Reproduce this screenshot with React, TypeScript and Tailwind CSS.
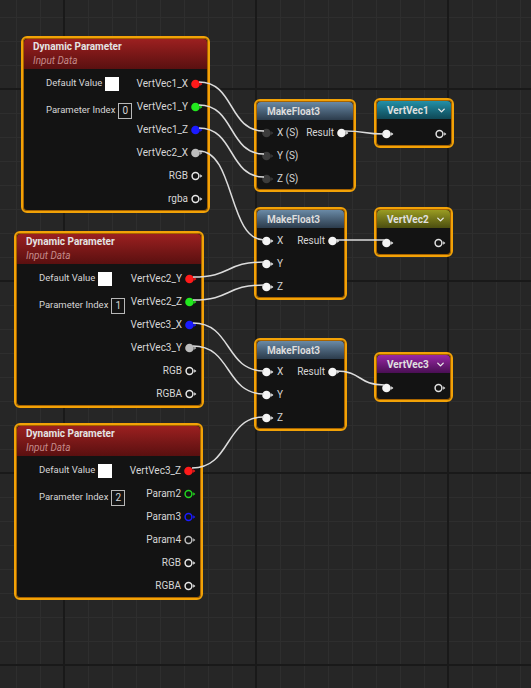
import React from "react";
import { ChevronDown } from "lucide-react";

type PinKind = "filled" | "ring";

function Pin({ color, kind }: { color: string; kind: PinKind }) {
  return (
    <svg width="12" height="10" viewBox="0 0 12 10" className="shrink-0">
      {kind === "filled" ? (
        <circle cx="4.5" cy="5" r="4.3" fill={color} />
      ) : (
        <circle cx="4.5" cy="5" r="3.4" fill="none" stroke={color} strokeWidth="1.5" />
      )}
      <path d="M9.2 3.2 L11.4 5 L9.2 6.8 Z" fill={color} />
    </svg>
  );
}

type Output = { label: string; color: string; kind: PinKind };

function DynamicParameter({
  className,
  index,
  outputs,
}: {
  className: string;
  index: number;
  outputs: Output[];
}) {
  return (
    <div
      className={`absolute rounded-[6px] border-2 border-[#f2a207] bg-[#131313] shadow-[inset_0_0_0_1px_#a86400] ${className}`}
    >
      <div className="m-px rounded-t-[4px] h-[30px] pl-[9px] pt-[3px] bg-linear-to-b from-[#9c2020] to-[#5a1010] leading-none">
        <div className="text-[10px] font-bold text-[#e4e4e4]">Dynamic Parameter</div>
        <div className="mt-[4px] text-[10px] italic text-[#c48a8a]">Input Data</div>
      </div>
      <div className="flex justify-between pt-[2px] pb-px whitespace-nowrap">
        <div className="shrink-0 pl-[23px] text-[9.5px] text-[#d6d6d6]">
          <div className="h-[23px] flex items-center gap-[3px]">
            <span>Default Value</span>
            <span className="w-[14px] h-[14px] bg-white" />
          </div>
          <div className="mt-[4px] h-[23px] flex items-center gap-[3px]">
            <span>Parameter Index</span>
            <span className="w-[14px] h-[16px] border border-[#b8b8b8] flex items-center justify-center text-[10px]">
              {index}
            </span>
          </div>
        </div>
        <div className="shrink-0 pr-[5px] text-[10px] text-[#d6d6d6]">
          {outputs.map((o) => (
            <div key={o.label} className="h-[23px] flex items-center justify-end gap-[3px]">
              <span>{o.label}</span>
              <Pin color={o.color} kind={o.kind} />
            </div>
          ))}
        </div>
      </div>
    </div>
  );
}

function MakeFloat3({
  className,
  labels,
  pinColor,
}: {
  className: string;
  labels: string[];
  pinColor: string;
}) {
  return (
    <div
      className={`absolute rounded-[6px] border-2 border-[#f2a207] bg-[#131313] shadow-[inset_0_0_0_1px_#a86400] ${className}`}
    >
      <div className="m-px rounded-t-[4px] h-[18px] pl-[10px] flex items-center bg-linear-to-b from-[#6a8aa6] to-[#2c3c4c] text-[10px] font-bold text-[#dcdcdc]">
        MakeFloat3
      </div>
      <div className="flex justify-between text-[10px] text-[#d6d6d6] whitespace-nowrap">
        <div className="pl-[6px]">
          {labels.map((l) => (
            <div key={l} className="h-[23px] flex items-center gap-[3px]">
              <Pin color={pinColor} kind="filled" />
              <span>{l}</span>
            </div>
          ))}
        </div>
        <div className="pr-[5px]">
          <div className="h-[23px] flex items-center gap-[3px]">
            <span>Result</span>
            <Pin color="#f4f4f4" kind="filled" />
          </div>
        </div>
      </div>
    </div>
  );
}

function VarNode({ className, title, header }: { className: string; title: string; header: string }) {
  return (
    <div
      className={`absolute rounded-[6px] border-2 border-[#f2a207] bg-[#131313] shadow-[inset_0_0_0_1px_#a86400] ${className}`}
    >
      <div className={`m-px rounded-t-[4px] h-[18px] pl-[10px] pr-[4px] flex items-center justify-between ${header}`}>
        <span className="text-[10px] font-bold text-[#e0e0e0]">{title}</span>
        <ChevronDown size={11} strokeWidth={3} color="#e8e8e8" />
      </div>
      <div className="flex justify-between pl-[6px] pr-[5px] pt-[2px] pb-px">
        <div className="h-[23px] flex items-center">
          <Pin color="#f4f4f4" kind="filled" />
        </div>
        <div className="h-[23px] flex items-center">
          <Pin color="#e0e0e0" kind="ring" />
        </div>
      </div>
    </div>
  );
}

const wires: [number, number, number, number][] = [
  [199, 82, 264, 131],
  [199, 105, 264, 154],
  [199, 128, 264, 177],
  [199, 151, 264, 240],
  [193, 277, 264, 262],
  [193, 300, 264, 285],
  [193, 323, 264, 371],
  [193, 346, 264, 394],
  [192, 468, 264, 417],
  [345, 131, 384, 134],
  [336, 240, 384, 240],
  [336, 371, 384, 385],
];

function wirePath([x1, y1, x2, y2]: [number, number, number, number]) {
  const dx = Math.max(20, (x2 - x1) * 0.55);
  return `M${x1} ${y1} C${x1 + dx} ${y1} ${x2 - dx} ${y2} ${x2} ${y2}`;
}

function Grid() {
  const minorX = Array.from({ length: 23 }, (_, i) => 16 + i * 24);
  const minorY = Array.from({ length: 29 }, (_, i) => 17 + i * 24);
  return (
    <svg className="absolute inset-0" width="531" height="688">
      {minorX.map((x) => (
        <line key={`x${x}`} x1={x + 0.5} y1="0" x2={x + 0.5} y2="688" stroke="#2e2e2e" strokeWidth="1" />
      ))}
      {minorY.map((y) => (
        <line key={`y${y}`} x1="0" y1={y + 0.5} x2="531" y2={y + 0.5} stroke="#2e2e2e" strokeWidth="1" />
      ))}
      {[64, 256, 448].map((x) => (
        <line key={`X${x}`} x1={x} y1="0" x2={x} y2="688" stroke="#191919" strokeWidth="2" />
      ))}
      {[89, 281, 473, 665].map((y) => (
        <line key={`Y${y}`} x1="0" y1={y} x2="531" y2={y} stroke="#191919" strokeWidth="2" />
      ))}
    </svg>
  );
}

export default function App() {
  return (
    <div className="relative w-[531px] h-[688px] overflow-hidden bg-[#262626] font-['Roboto',sans-serif]">
      <Grid />

      <DynamicParameter
        className="left-[21px] top-[36px] w-[189px]"
        index={0}
        outputs={[
          { label: "VertVec1_X", color: "#ff1a1a", kind: "filled" },
          { label: "VertVec1_Y", color: "#22e81e", kind: "filled" },
          { label: "VertVec1_Z", color: "#1b1bff", kind: "filled" },
          { label: "VertVec2_X", color: "#bdbdbd", kind: "filled" },
          { label: "RGB", color: "#e6e6e6", kind: "ring" },
          { label: "rgba", color: "#e6e6e6", kind: "ring" },
        ]}
      />
      <DynamicParameter
        className="left-[14px] top-[231px] w-[190px]"
        index={1}
        outputs={[
          { label: "VertVec2_Y", color: "#ff1a1a", kind: "filled" },
          { label: "VertVec2_Z", color: "#22e81e", kind: "filled" },
          { label: "VertVec3_X", color: "#1b1bff", kind: "filled" },
          { label: "VertVec3_Y", color: "#bdbdbd", kind: "filled" },
          { label: "RGB", color: "#e6e6e6", kind: "ring" },
          { label: "RGBA", color: "#e6e6e6", kind: "ring" },
        ]}
      />
      <DynamicParameter
        className="left-[14px] top-[423px] w-[189px]"
        index={2}
        outputs={[
          { label: "VertVec3_Z", color: "#ff1a1a", kind: "filled" },
          { label: "Param2", color: "#22d41e", kind: "ring" },
          { label: "Param3", color: "#1b1bff", kind: "ring" },
          { label: "Param4", color: "#bdbdbd", kind: "ring" },
          { label: "RGB", color: "#e6e6e6", kind: "ring" },
          { label: "RGBA", color: "#e6e6e6", kind: "ring" },
        ]}
      />

      <MakeFloat3 className="left-[254px] top-[99px] w-[102px]" labels={["X (S)", "Y (S)", "Z (S)"]} pinColor="#3c3c3c" />
      <MakeFloat3 className="left-[254px] top-[207px] w-[93px]" labels={["X", "Y", "Z"]} pinColor="#f4f4f4" />
      <MakeFloat3 className="left-[254px] top-[338px] w-[93px]" labels={["X", "Y", "Z"]} pinColor="#f4f4f4" />

      <VarNode className="left-[374px] top-[98px] w-[80px]" title="VertVec1" header="bg-linear-to-b from-[#2390a8] to-[#0f4856]" />
      <VarNode className="left-[374px] top-[207px] w-[79px]" title="VertVec2" header="bg-linear-to-b from-[#9a9c22] to-[#4c4e10]" />
      <VarNode className="left-[374px] top-[352px] w-[79px]" title="VertVec3" header="bg-linear-to-b from-[#9a28a6] to-[#4a0f54]" />

      <svg className="absolute inset-0 pointer-events-none" width="531" height="688">
        {wires.map((w, i) => (
          <path key={i} d={wirePath(w)} fill="none" stroke="#dcdcdc" strokeWidth="1.5" />
        ))}
      </svg>
    </div>
  );
}
